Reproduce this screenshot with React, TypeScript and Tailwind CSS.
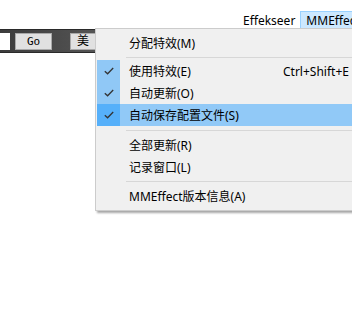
import React from "react";

const font = { fontFamily: '"Noto Sans", "Noto Sans CJK SC", sans-serif' };

function Check() {
  return (
    <svg width="10" height="8" viewBox="0 0 10 8" fill="none">
      <path d="M0.8 4.2 L3.6 6.8 L9.2 1" stroke="#333" strokeWidth="1.3" />
    </svg>
  );
}

type Item = { label: string; checked?: boolean; active?: boolean; shortcut?: string };

function Row({ label, checked, active, shortcut }: Item) {
  return (
    <div className={`flex h-[22px] items-center ${active ? "bg-[#91c9f7]" : ""}`}>
      <div
        className={`flex h-[22px] w-[23px] items-center justify-center ${
          checked ? (active ? "bg-[#56b0fa]" : "bg-[#90c8f6]") : ""
        }`}
      >
        {checked && <Check />}
      </div>
      <div className="ml-[9px] w-[154px] pt-px text-[12px] leading-none text-black">{label}</div>
      {shortcut && <div className="pt-px text-[12px] leading-none text-black">{shortcut}</div>}
    </div>
  );
}

function Sep({ h }: { h: string }) {
  return (
    <div className={`flex ${h} items-center pl-[29px]`}>
      <div className="h-px w-full bg-[#d7d7d7]" />
    </div>
  );
}

export default function App() {
  return (
    <div className="relative h-[312px] w-[352px] overflow-hidden bg-white" style={font}>
      <div className="flex h-[11px] overflow-hidden">
        <span className="ml-[296px] mt-[-13px] text-[12px] leading-none">口</span>
        <span className="ml-[34px] mt-[-13px] text-[12px] leading-none">ク</span>
      </div>
      <div className="flex h-[18px] items-center">
        <div className="ml-[243px] pt-px text-[12px] leading-none text-black">Effekseer</div>
        <div className="ml-[5px] flex h-[18px] items-center border border-[#99d1ff] bg-[#cce8ff] pl-[5px] pr-[8px] pt-px text-[12px] leading-none text-black">
          MMEffect
        </div>
      </div>
      <div className="flex h-[24px] items-center border-y border-[#2a2a2a] bg-gradient-to-r from-[#3c3c3c] via-[#6a6a6a] to-[#9a9a9a]">
        <div className="h-[17px] w-[10px] bg-white" />
        <div
          className="ml-[5px] flex h-[17px] w-[37px] items-center justify-center border border-[#a9a9a9] bg-[#e1e1e1] text-[11px] leading-none text-black"
          style={{ fontFamily: '"DejaVu Sans Mono", monospace' }}
        >
          Go
        </div>
        <div className="ml-[18px] flex h-[17px] w-[26px] items-center justify-center border border-[#a9a9a9] bg-[#e1e1e1] text-[12px] leading-none text-black">
          美
        </div>
      </div>

      <div className="absolute left-[95px] top-[28px] w-[280px] border border-[#cccccc] bg-[#f0f0f0] pb-[3px] pl-px pt-[3px] shadow-[2px_2px_2px_rgba(0,0,0,0.35)]">
        <Row label="分配特效(M)" />
        <Sep h="h-[6px]" />
        <Row label="使用特效(E)" checked shortcut="Ctrl+Shift+E" />
        <Row label="自动更新(O)" checked />
        <Row label="自动保存配置文件(S)" checked active />
        <Sep h="h-[8px]" />
        <Row label="全部更新(R)" />
        <Row label="记录窗口(L)" />
        <Sep h="h-[7px]" />
        <Row label="MMEffect版本信息(A)" />
      </div>
    </div>
  );
}
